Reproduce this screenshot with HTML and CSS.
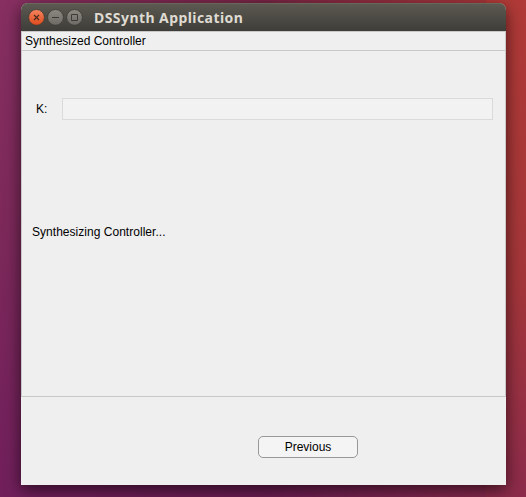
FILE: index.html
```html
<!DOCTYPE html>
<html lang="en">
<head>
<meta charset="utf-8">
<title>DSSynth Application</title>
<link rel="stylesheet" href="styles.css">
</head>
<body>
<main class="window">
  <header class="titlebar">
    <svg class="controls" width="56" height="18" viewBox="0 0 56 18" aria-hidden="true">
      <defs>
        <linearGradient id="close" x1="0" y1="0" x2="0" y2="1"><stop offset="0" stop-color="#f58560"/><stop offset="1" stop-color="#df4a1b"/></linearGradient>
        <linearGradient id="gray" x1="0" y1="0" x2="0" y2="1"><stop offset="0" stop-color="#8b8980"/><stop offset="1" stop-color="#6c6a63"/></linearGradient>
      </defs>
      <g stroke="#3b3a35" stroke-width=".8">
        <circle cx="8.5" cy="9.4" r="7.9" fill="url(#close)"/>
        <circle cx="27.5" cy="9.4" r="7.9" fill="url(#gray)"/>
        <circle cx="46.5" cy="9.4" r="7.9" fill="url(#gray)"/>
      </g>
      <path d="M6 7l5 5M11 7l-5 5" fill="none" stroke="#4a2a1d" stroke-width="1.2"/>
      <path d="M24 9.5h7M43.5 6.5h6v6h-6z" fill="none" stroke="#3c3b37"/>
    </svg>
    <h1 class="title">DSSynth Application</h1>
  </header>
  <section class="panel">
    <h2 class="panel-title">Synthesized Controller</h2>
    <div class="panel-body">
      <div class="field">
        <label class="label" for="k">K:</label>
        <input class="input" id="k" type="text" readonly>
      </div>
      <p class="status">Synthesizing Controller...</p>
    </div>
  </section>
  <footer class="footer">
    <button class="button" type="button">Previous</button>
  </footer>
</main>
</body>
</html>
```

FILE: styles.css
```css
* { box-sizing: border-box; }
body {
  margin: 0;
  height: 497px;
  padding: 3px 20px 12px 21px;
  overflow: hidden;
  font: 12px/14px "Liberation Sans", sans-serif;
  color: #000;
  background:
    linear-gradient(to bottom, #862f60, #7c295a 45%, #701f5b) left / 40px 100% no-repeat,
    linear-gradient(to bottom, #b03a37, #a43639 55%, #8c2b4b) right / 40px 100% no-repeat,
    linear-gradient(to right, #852e60, #782545 50%, #ac3938) top / 100% 30px no-repeat,
    linear-gradient(to right, #701f5b, #6b1d52 50%, #8c2b4b);
}
.window {
  display: flex;
  flex-direction: column;
  height: 482px;
  background: #efefef;
  border-radius: 7px 7px 0 0;
  box-shadow: 0 5px 16px rgba(0, 0, 0, .6);
}
.titlebar {
  display: flex;
  align-items: center;
  gap: 10px;
  height: 28px;
  padding: 0 0 0 7px;
  border-radius: 7px 7px 0 0;
  background: linear-gradient(#5c5a51, #3e3d39);
  box-shadow: inset 0 1px #69665c;
}
.controls { display: block; flex: none; }
.title {
  margin: 0;
  padding-top: 1px;
  font: bold 14px/28px "Noto Sans", sans-serif;
  letter-spacing: .43px;
  color: #dfdbd2;
  white-space: nowrap;
}
.panel {
  height: 366px;
  border: 1px solid #c8c8c8;
}
.panel-title {
  margin: 0;
  height: 19px;
  padding: 2px 3px;
  font: inherit;
  border-bottom: 1px solid #c8c8c8;
}
.panel-body { padding: 47px 12px 0 10px; }
.field {
  display: flex;
  align-items: center;
  height: 22px;
}
.label { width: 30px; padding-left: 4px; }
.input {
  flex: 1;
  height: 22px;
  border: 1px solid #dadada;
  background: #f2f2f2;
}
.status { margin: 105px 0 0; letter-spacing: .03px; }
.footer {
  flex: 1;
  padding: 39px 0 0 237px;
}
.button {
  display: block;
  width: 100px;
  height: 22px;
  padding: 0;
  border: 1px solid #989898;
  border-radius: 5px;
  background: #f4f4f4;
  color: #000;
  font: inherit;
}
```
